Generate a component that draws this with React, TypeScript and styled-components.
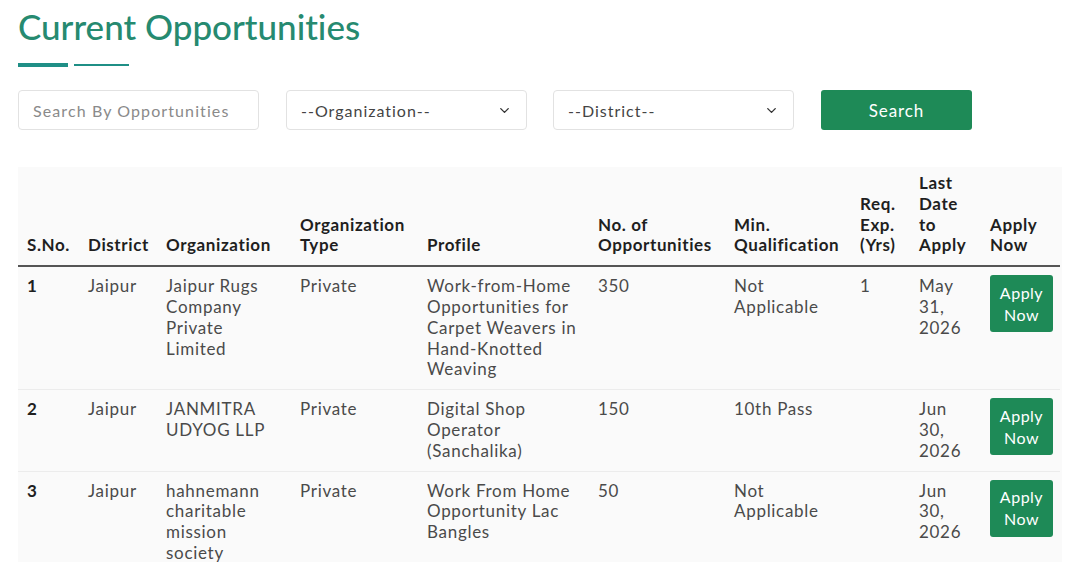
import React from 'react';
import styled, { createGlobalStyle } from 'styled-components';

const GlobalStyle = createGlobalStyle`
  html, body {
    margin: 0;
    padding: 0;
    background: #ffffff;
    font-family: 'Lato', 'Open Sans', sans-serif;
    font-variant-ligatures: none;
    overflow: hidden;
  }
`;

const Page = styled.div`
  padding: 4px 18px 0 18px;
  width: 1080px;
  box-sizing: border-box;
`;

const Title = styled.h2`
  margin: 0;
  font-size: 35px;
  font-weight: 500;
  color: #268a70;
  letter-spacing: 0;
  line-height: 44px;
  font-variant-ligatures: none;
`;

const Underline = styled.div`
  display: flex;
  align-items: center;
  gap: 6px;
  margin-top: 14px;
  height: 6px;
`;

const Bar = styled.span<{ $w: number; $h: number }>`
  display: block;
  width: ${(p) => p.$w}px;
  height: ${(p) => p.$h}px;
  background: #1f8f86;
`;

const Filters = styled.div`
  display: flex;
  align-items: center;
  margin-top: 22px;
`;

const Field = styled.div<{ $w: number; $mr: number }>`
  width: ${(p) => p.$w}px;
  margin-right: ${(p) => p.$mr}px;
  height: 40px;
  box-sizing: border-box;
  border: 1px solid #e2e2e2;
  border-radius: 4px;
  display: flex;
  align-items: center;
  justify-content: space-between;
  padding: 0 14px;
  font-size: 16px;
  letter-spacing: 1.1px;
  background: #fff;
`;

const Placeholder = styled.span`
  color: #8a8a8a;
`;

const SelectText = styled.span`
  color: #444;
  letter-spacing: 1px;
`;

const SearchButton = styled.button`
  width: 151px;
  height: 40px;
  border: none;
  border-radius: 3px;
  background: #1e8a57;
  color: #fff;
  font-family: inherit;
  font-size: 17px;
  letter-spacing: 0.9px;
`;

const Card = styled.div`
  margin-top: 37px;
  width: 1044px;
  background: #fafafa;
`;

const Table = styled.table`
  width: 1042px;
  border-collapse: collapse;
  table-layout: fixed;
`;

const Th = styled.th`
  text-align: left;
  vertical-align: bottom;
  font-size: 17px;
  font-weight: 700;
  color: #1f1f1f;
  line-height: 20.8px;
  letter-spacing: 0.6px;
  padding: 6px 9px 9px 9px;
  border-bottom: 2px solid #555;
`;

const Td = styled.td<{ $bold?: boolean }>`
  vertical-align: top;
  font-size: 17px;
  font-weight: ${(p) => (p.$bold ? 700 : 400)};
  color: ${(p) => (p.$bold ? '#1f1f1f' : '#4a4a4a')};
  line-height: 20.8px;
  letter-spacing: 0.7px;
  padding: 9px 9px 9px 9px;
  border-bottom: 1px solid #ececec;
`;

const ApplyTd = styled.td`
  vertical-align: top;
  padding: 9px 0 9px 9px;
  border-bottom: 1px solid #ececec;
`;

const ApplyButton = styled.button`
  width: 63px;
  height: 57px;
  margin-top: -1px;
  border: none;
  border-radius: 3px;
  background: #1e8a57;
  color: #fff;
  font-family: inherit;
  font-size: 16px;
  line-height: 22px;
  letter-spacing: 0.5px;
  padding: 0;
`;

const Chevron = () => (
  <svg width="15" height="15" viewBox="0 0 24 24" fill="none" stroke="#333" strokeWidth="2.2" strokeLinecap="round" strokeLinejoin="round">
    <path d="M6 9l6 6 6-6" />
  </svg>
);

const widths = [61, 78, 134, 127, 171, 136, 126, 59, 71, 79];

const headers = [
  'S.No.',
  'District',
  'Organization',
  'Organization Type',
  'Profile',
  'No. of Opportunities',
  'Min. Qualification',
  'Req. Exp. (Yrs)',
  'Last Date to Apply',
  'Apply Now',
];

const rows = [
  ['1', 'Jaipur', 'Jaipur Rugs Company Private Limited', 'Private', 'Work-from-Home Opportunities for Carpet Weavers in Hand-Knotted Weaving', '350', 'Not Applicable', '1', 'May 31, 2026'],
  ['2', 'Jaipur', 'JANMITRA UDYOG LLP', 'Private', 'Digital Shop Operator (Sanchalika)', '150', '10th Pass', '', 'Jun 30, 2026'],
  ['3', 'Jaipur', 'hahnemann charitable mission society', 'Private', 'Work From Home Opportunity Lac Bangles', '50', 'Not Applicable', '', 'Jun 30, 2026'],
];

export default function App() {
  return (
    <Page>
      <GlobalStyle />
      <Title>Current Opportunities</Title>
      <Underline>
        <Bar $w={50} $h={4} />
        <Bar $w={55} $h={2} />
      </Underline>
      <Filters>
        <Field $w={241} $mr={27}>
          <Placeholder>Search By Opportunities</Placeholder>
        </Field>
        <Field $w={241} $mr={26}>
          <SelectText>--Organization--</SelectText>
          <Chevron />
        </Field>
        <Field $w={241} $mr={27}>
          <SelectText>--District--</SelectText>
          <Chevron />
        </Field>
        <SearchButton>Search</SearchButton>
      </Filters>
      <Card>
        <Table>
          <colgroup>
            {widths.map((w, i) => (
              <col key={i} style={{ width: w }} />
            ))}
          </colgroup>
          <thead>
            <tr>
              {headers.map((h) => (
                <Th key={h}>{h}</Th>
              ))}
            </tr>
          </thead>
          <tbody>
            {rows.map((r) => (
              <tr key={r[0]}>
                {r.map((c, i) => (
                  <Td key={i} $bold={i === 0}>
                    {c}
                  </Td>
                ))}
                <ApplyTd>
                  <ApplyButton>
                    Apply
                    <br />
                    Now
                  </ApplyButton>
                </ApplyTd>
              </tr>
            ))}
          </tbody>
        </Table>
      </Card>
    </Page>
  );
}
